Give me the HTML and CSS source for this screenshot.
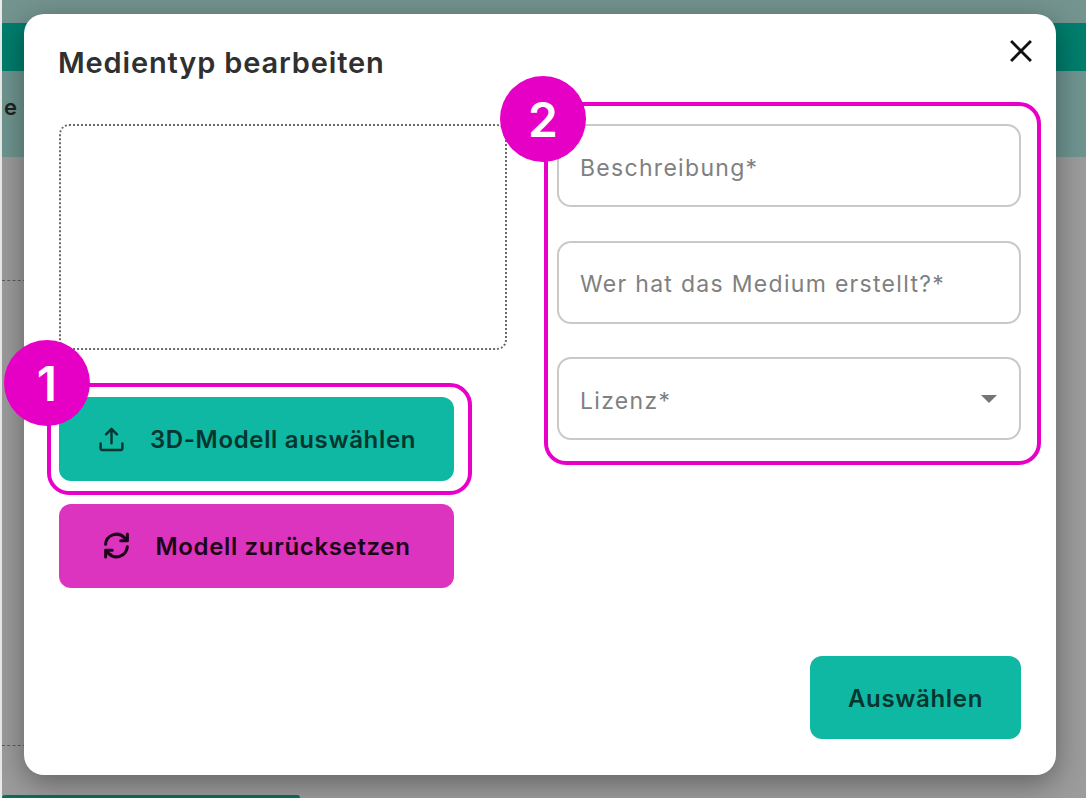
FILE: index.html
```html
<!DOCTYPE html>
<html lang="de">
<head>
<meta charset="utf-8">
<title>Medientyp bearbeiten</title>
<link rel="stylesheet" href="styles.css">
</head>
<body>
<div class="backdrop">
  <div class="band band-top"></div>
  <div class="band band-header"></div>
  <div class="band band-sub"><span class="sub-letter">e</span></div>
  <div class="band band-main">
    <div class="dash dash-a"></div>
    <div class="dash dash-b"></div>
    <div class="bottom-bar"></div>
  </div>
</div>
<section class="modal">
  <header class="modal-head">
    <h1 class="modal-title">Medientyp bearbeiten</h1>
    <svg class="close" viewBox="0 0 24 24" aria-label="Schließen"><path d="M3.5 3.5 20.5 20.5M20.5 3.5 3.5 20.5"/></svg>
  </header>
  <div class="modal-body">
    <div class="col-left">
      <div class="dropzone"></div>
      <button class="btn btn-teal btn-upload">
        <svg class="icon" viewBox="0 0 24 24"><path d="M12 16V4M7.5 8.5 12 4l4.500 4.500M3 16v4.500a1 1 0 0 0 1 1h16a1 1 0 0 0 1-1V16"/></svg>
        <span>3D-Modell auswählen</span>
      </button>
      <button class="btn btn-pink">
        <svg class="icon icon-sync" viewBox="0 0 24 24"><path d="M3 11a9 9 0 0 1 15.500-5.500L21 8M21 2.500V8h-5.500M21 13a9 9 0 0 1-15.500 5.500L3 16M3 21.500V16h5.500"/></svg>
        <span>Modell zurücksetzen</span>
      </button>
    </div>
    <div class="col-right">
      <div class="field"><span class="placeholder">Beschreibung*</span></div>
      <div class="field"><span class="placeholder">Wer hat das Medium erstellt?*</span></div>
      <div class="field field-select"><span class="placeholder">Lizenz*</span><i class="caret"></i></div>
    </div>
  </div>
  <footer class="modal-foot">
    <button class="btn btn-teal btn-submit"><span>Auswählen</span></button>
  </footer>
</section>
<div class="mark mark-one"></div>
<div class="mark mark-two"></div>
<div class="badge badge-one">1</div>
<div class="badge badge-two">2</div>
</body>
</html>
```
FILE: styles.css
```css
* { box-sizing: border-box; }
html, body { margin: 0; height: 798px; overflow: hidden; background: #e9eceb; }
body { font-family: Inter, "Liberation Sans", sans-serif; position: relative; }

.backdrop { margin-left: 2px; height: 798px; display: flex; flex-direction: column; }
.band-top { height: 23px; background: #74948f; }
.band-header { height: 48px; background: #017e6d; }
.band-sub { height: 86px; background: #6f9590; display: flex; align-items: center; padding-left: 2px; }
.sub-letter { font-size: 22px; font-weight: 600; color: #222; margin-top: -14px; }
.band-main { flex: 1; background: #9c9c9c; position: relative; }
.dash { position: absolute; left: 0; width: 24px; border-top: 1px dashed #5c5c5c; }
.dash-a { top: 123px; }
.dash-b { top: 588px; }
.bottom-bar { position: absolute; left: 0; bottom: 0; width: 298px; height: 3px; background: #0b6d5f; border-radius: 3px 3px 0 0; }

.modal {
  position: absolute; left: 24px; top: 14px; width: 1032px; height: 761px;
  background: #fff; border-radius: 20px;
  box-shadow: 0 8px 30px rgba(0,0,0,.38);
  padding: 0 35px 36px;
  display: flex; flex-direction: column;
}
.modal-head { height: 110px; display: flex; justify-content: space-between; align-items: flex-start; padding-top: 28px; }
.modal-title { margin: 0 0 0 -1px; font-size: 29px; line-height: 42px; font-weight: 600; letter-spacing: .85px; color: #303030; }
.close { width: 28px; height: 28px; margin-top: -5px; margin-right: -14px; fill: none; stroke: #111; stroke-width: 2.500; }

.modal-body { flex: 1; display: flex; gap: 50px; align-items: flex-start; }
.col-left { width: 448px; display: flex; flex-direction: column; align-items: flex-start; }
.dropzone { width: 448px; height: 226px; border: 2px dotted #6a6a6a; border-radius: 10px; margin-bottom: 47px; }
.col-right { width: 464px; display: flex; flex-direction: column; gap: 33.500px; }

.btn {
  border: 0; border-radius: 12px; font-family: inherit; font-weight: 600; font-size: 24px;
  letter-spacing: .66px; display: flex; align-items: center; justify-content: center; padding: 1px 0 0;
}
.btn-teal { background: #0fb8a2; color: #05352f; }
.btn-pink { background: #dd34bf; color: #1c0418; width: 395px; height: 84px; gap: 24px; }
.btn-upload { width: 395px; height: 84px; margin-bottom: 23px; gap: 24px; }
.btn-submit { width: 211px; height: 83px; }
.icon { width: 29px; height: 29px; margin-top: -2px; fill: none; stroke: currentColor; stroke-width: 2; stroke-linecap: round; stroke-linejoin: round; }
.icon-sync { stroke-width: 2.500; }

.field {
  height: 83px; border: 2px solid #c9c9c9; border-radius: 14px;
  display: flex; align-items: center; justify-content: space-between;
  padding: 4px 22px 0 21px;
}
.placeholder { font-size: 23px; letter-spacing: 1.3px; color: #808080; }
.caret { width: 0; height: 0; border-left: 8px solid transparent; border-right: 8px solid transparent; border-top: 8px solid #757575; margin-top: -4px; }

.modal-foot { display: flex; justify-content: flex-end; }

.mark { position: absolute; border: 4px solid #e800c8; border-radius: 22px; }
.mark-one { left: 47px; top: 383px; width: 425px; height: 112px; }
.mark-two { left: 544px; top: 102px; width: 497px; height: 363px; }
.badge {
  position: absolute; width: 86px; height: 86px; border-radius: 50%; background: #e600c6; color: #fff;
  font-size: 48px; font-weight: 600; display: flex; align-items: center; justify-content: center;
}
.badge-one { left: 4px; top: 340px; }
.badge-two { left: 500px; top: 76px; }
```
